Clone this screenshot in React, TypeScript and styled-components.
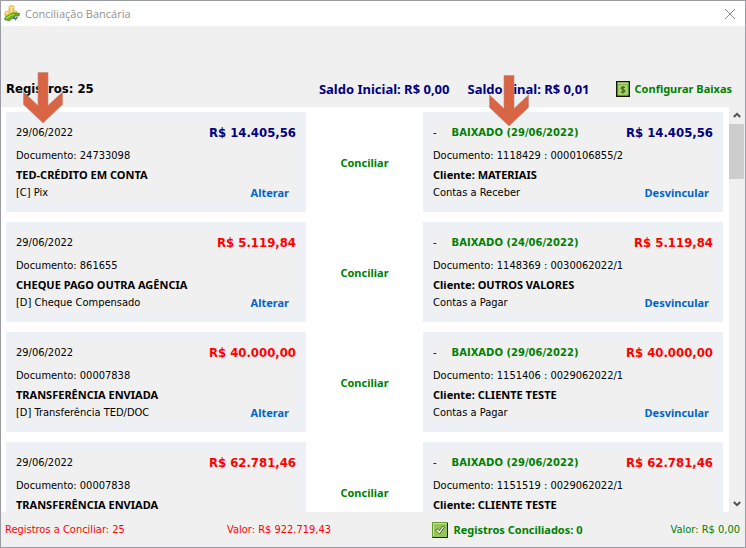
import React from "react";
import styled, { createGlobalStyle } from "styled-components";

const textFont = `"DejaVu Sans Condensed", "DejaVu Sans", sans-serif`;
const labelFont = `"Noto Sans", "Open Sans", sans-serif`;
const wideFont = `"DejaVu Sans", sans-serif`;

const color = {
  navy: "#000080",
  red: "#ff0000",
  green: "#008000",
  blue: "#0066cc",
  face: "#f0f0f0",
  card: "#edf1f5",
  arrow: "#d96545",
};

const GlobalStyle = createGlobalStyle`
  * { box-sizing: border-box; }
  body { margin: 0; font-family: ${textFont}; font-size: 11px; line-height: 16px; color: #000; }
  h1, h2, p, ul { margin: 0; padding: 0; }
  button { border: 0; padding: 0; background: none; cursor: pointer; }
`;

const Window = styled.main`
  position: relative;
  display: flex;
  flex-direction: column;
  height: 100vh;
  border: 1px solid #999ca3;
  background: ${color.face};
  overflow: hidden;
`;

const TitleBar = styled.header`
  display: flex;
  align-items: center;
  gap: 4px;
  height: 25px;
  flex: none;
  padding: 0 9px 0 3px;
  background: #fff;
`;

const Title = styled.h1`
  flex: 1;
  font: 400 11px/16px "Open Sans", "Noto Sans", sans-serif;
  color: #929292;
`;

const CloseButton = styled.button`
  display: flex;
  color: #8a8a8a;
`;

const Summary = styled.section`
  display: flex;
  align-items: center;
  flex: none;
  height: 81px;
  padding: 44px 13px 0 5px;
`;

const Count = styled.h2`
  flex: 1;
  font: 700 13px/18px ${textFont};
`;

const Balance = styled.p`
  margin-right: 18px;
  font: 700 13px/18px ${labelFont};
  color: ${color.navy};
  white-space: nowrap;
`;

const Action = styled.button<{ $tone: "green" | "blue" }>`
  display: inline-flex;
  align-items: center;
  gap: 5px;
  font: 700 11px/16px ${labelFont};
  color: ${(p) => color[p.$tone]};
  white-space: nowrap;
`;

const ConfigAction = styled(Action)`
  margin-left: 8px;
`;

const Body = styled.section`
  display: flex;
  flex: 1;
  min-height: 0;
`;

const List = styled.ul`
  display: flex;
  flex: 1;
  flex-direction: column;
  gap: 10px;
  && { padding: 5px 6px 0 5px; }
  background: #fff;
  list-style: none;
  overflow: hidden;
`;

const Pair = styled.li`
  display: grid;
  flex: none;
  grid-template-columns: 1fr 117px 1fr;
  align-items: stretch;
`;

const Middle = styled.div`
  display: flex;
  justify-content: center;
  align-items: center;
  padding-top: 2px;
`;

const Card = styled.article`
  padding: 10px;
  background: ${color.card};
`;

const CardFace = styled.div`
  display: grid;
  grid-template-rows: 24px 20px 18px 18px;
  background: ${color.face};
`;

const Line = styled.div`
  display: flex;
  align-items: center;
  justify-content: space-between;
  white-space: nowrap;
`;

const TopLine = styled(Line)`
  align-items: flex-start;
  padding-top: 3px;
`;

const LastLine = styled(Line)<{ $inset: number }>`
  padding-right: ${(p) => p.$inset}px;
`;

const Strong = styled.strong`
  font: 700 11px/16px ${labelFont};
`;

const Status = styled.span`
  display: flex;
  gap: 15px;
`;

const Settled = styled.strong`
  font: 700 10px/16px ${wideFont};
  color: ${color.green};
`;

const Amount = styled.strong<{ $credit?: boolean }>`
  font: 700 13px/16px ${textFont};
  color: ${(p) => (p.$credit ? color.navy : color.red)};
`;

const ScrollTrack = styled.div`
  display: flex;
  flex: none;
  flex-direction: column;
  width: 16px;
  color: #505050;
`;

const ScrollButton = styled.button`
  display: flex;
  align-items: center;
  justify-content: center;
  height: 17px;
  color: inherit;
`;

const ScrollThumb = styled.div`
  flex: none;
  height: 55px;
  margin-right: 1px;
  background: #cdcdcd;
`;

const ScrollRest = styled.div`
  flex: 1;
`;

const Footer = styled.footer`
  display: grid;
  grid-template-columns: 222px 1fr auto auto;
  align-items: center;
  flex: none;
  height: 35px;
  padding: 0 5px 0 4px;
`;

const Total = styled.p<{ $tone: "red" | "green" }>`
  color: ${(p) => color[p.$tone]};
`;

const Reconciled = styled.p`
  display: flex;
  align-items: center;
  gap: 5px;
  && { margin-right: 88px; }
  font: 700 11px/16px ${labelFont};
  color: ${color.green};
`;

const Pointer = styled.svg<{ $left: number; $top: number }>`
  position: absolute;
  left: ${(p) => p.$left}px;
  top: ${(p) => p.$top}px;
  pointer-events: none;
`;

function DownArrow({ left, top }: { left: number; top: number }) {
  return (
    <Pointer $left={left} $top={top} width="40" height="52" viewBox="0 0 40 52" aria-hidden="true">
      <path d="M15 .5H25V33.5L39.5 20V32.5L20 51L.5 32.5V20L15 33.5Z" fill={color.arrow} stroke="#b98c7f" strokeWidth=".6" />
    </Pointer>
  );
}

function AppIcon() {
  return (
    <svg width="17" height="17" viewBox="0 0 17 17" aria-hidden="true">
      <path d="M5 1.2L7.5 .6L10 1.2V6L13 6.6V11H1V7L5 6Z" fill="#f2cb62" stroke="#dcae45" strokeWidth=".8" />
      <path d="M5.6 2L7.5 3L9.4 2M7.5 3V6.5M1.8 7.6L4 8.4" fill="none" stroke="#fff0a9" strokeWidth="1.2" />
      <path d="M1 12.5L6.5 9L9 8L15.5 8.4L15 10.8L11 11L5.5 15.6L.8 14.8Z" fill="#65b51b" stroke="#398319" strokeWidth=".8" />
      <path d="M2 13.4L7 10L10 9.4" fill="none" stroke="#b5df3f" strokeWidth="1.3" />
      <path d="M8.5 14L10.5 12.4L11.5 14.5L13.5 12" fill="none" stroke="#52768c" strokeWidth="1.4" />
    </svg>
  );
}

function MoneyIcon() {
  return (
    <svg width="14" height="16" viewBox="0 0 14 16" aria-hidden="true">
      <path d="M.7.7H13.3V15.3H.7Z" fill="#8dbd50" stroke="#10180b" strokeWidth="1.4" />
      <path d="M1.5 2H12.5" stroke="#d6f0a4" />
      <path d="M2 3.8H12V14.2H2Z" fill="#a9d568" stroke="#79aa40" strokeWidth=".6" />
      <path d="M9 6.6C7.8 5.7 5.1 5.9 5.1 7.3C5.1 8.9 8.9 8.3 8.9 10C8.9 11.5 6 11.7 4.8 10.8M7 5V12.5" fill="none" stroke="#3d6a20" strokeWidth="1.2" />
    </svg>
  );
}

function CheckIcon() {
  return (
    <svg width="16" height="16" viewBox="0 0 16 16" aria-hidden="true">
      <path d="M.5.5H15.5V15.5H.5Z" fill="#94c556" stroke="#6a9934" />
      <path d="M1.5 14V1.5H14" fill="none" stroke="#c3e58c" />
      <path d="M.5 15.5H15.5V1" fill="none" stroke="#17220f" />
      <path d="M3.5 8L5.5 6.8L7.3 8.8L11 3.8L12.6 5L7.5 12Z" fill="#f4faea" stroke="#385d1d" strokeWidth=".9" />
    </svg>
  );
}

function Chevron({ up }: { up?: boolean }) {
  return (
    <svg width="8" height="7" viewBox="0 0 8 7" aria-hidden="true">
      <path d={up ? "M.8 5L4 1.8L7.2 5" : "M.8 2L4 5.2L7.2 2"} fill="none" stroke="currentColor" strokeWidth="2" />
    </svg>
  );
}

interface Entry {
  amount: string;
  credit?: boolean;
  bankDocument: string;
  description: string;
  kind: string;
  settledOn: string;
  document: string;
  client: string;
  account: string;
}

const entries: Entry[] = [
  {
    amount: "R$ 14.405,56", credit: true, bankDocument: "24733098", description: "TED-CRÉDITO EM CONTA", kind: "[C] Pix",
    settledOn: "29/06/2022", document: "1118429 : 0000106855/2", client: "MATERIAIS", account: "Contas a Receber",
  },
  {
    amount: "R$ 5.119,84", bankDocument: "861655", description: "CHEQUE PAGO OUTRA AGÊNCIA", kind: "[D] Cheque Compensado",
    settledOn: "24/06/2022", document: "1148369 : 0030062022/1", client: "OUTROS VALORES", account: "Contas a Pagar",
  },
  {
    amount: "R$ 40.000,00", bankDocument: "00007838", description: "TRANSFERÊNCIA ENVIADA", kind: "[D] Transferência TED/DOC",
    settledOn: "29/06/2022", document: "1151406 : 0029062022/1", client: "CLIENTE TESTE", account: "Contas a Pagar",
  },
  {
    amount: "R$ 62.781,46", bankDocument: "00007838", description: "TRANSFERÊNCIA ENVIADA", kind: "",
    settledOn: "29/06/2022", document: "1151519 : 0029062022/1", client: "CLIENTE TESTE", account: "",
  },
];

function EntryPair({ entry }: { entry: Entry }) {
  return (
    <Pair>
      <Card>
        <CardFace>
          <TopLine>
            <span>29/06/2022</span>
            <Amount $credit={entry.credit}>{entry.amount}</Amount>
          </TopLine>
          <Line>Documento: {entry.bankDocument}</Line>
          <Line><Strong>{entry.description}</Strong></Line>
          {entry.kind && (
            <LastLine $inset={7}>
              <span>{entry.kind}</span>
              <Action type="button" $tone="blue">Alterar</Action>
            </LastLine>
          )}
        </CardFace>
      </Card>
      <Middle>
        <Action type="button" $tone="green">Conciliar</Action>
      </Middle>
      <Card>
        <CardFace>
          <TopLine>
            <Status>
              <span>-</span>
              <Settled>BAIXADO ({entry.settledOn})</Settled>
            </Status>
            <Amount $credit={entry.credit}>{entry.amount}</Amount>
          </TopLine>
          <Line>Documento: {entry.document}</Line>
          <Line><Strong>Cliente: {entry.client}</Strong></Line>
          {entry.account && (
            <LastLine $inset={4}>
              <span>{entry.account}</span>
              <Action type="button" $tone="blue">Desvincular</Action>
            </LastLine>
          )}
        </CardFace>
      </Card>
    </Pair>
  );
}

export default function App() {
  return (
    <>
      <GlobalStyle />
      <Window>
        <TitleBar>
          <AppIcon />
          <Title>Conciliação Bancária</Title>
          <CloseButton type="button" aria-label="Fechar">
            <svg width="12" height="12" viewBox="0 0 12 12" aria-hidden="true">
              <path d="M1 1L11 11M11 1L1 11" stroke="currentColor" />
            </svg>
          </CloseButton>
        </TitleBar>
        <Summary>
          <Count>Registros: 25</Count>
          <Balance>Saldo Inicial: R$ 0,00</Balance>
          <Balance>Saldo Final: R$ 0,01</Balance>
          <ConfigAction type="button" $tone="green">
            <MoneyIcon />
            Configurar Baixas
          </ConfigAction>
        </Summary>
        <Body>
          <List>
            {entries.map((entry) => (
              <EntryPair key={entry.amount} entry={entry} />
            ))}
          </List>
          <ScrollTrack>
            <ScrollButton type="button" aria-label="Rolar para cima"><Chevron up /></ScrollButton>
            <ScrollThumb />
            <ScrollRest />
            <ScrollButton type="button" aria-label="Rolar para baixo"><Chevron /></ScrollButton>
          </ScrollTrack>
        </Body>
        <Footer>
          <Total $tone="red">Registros a Conciliar: 25</Total>
          <Total $tone="red">Valor: R$ 922.719,43</Total>
          <Reconciled>
            <CheckIcon />
            Registros Conciliados: 0
          </Reconciled>
          <Total $tone="green">Valor: R$ 0,00</Total>
        </Footer>
        <DownArrow left={22} top={71} />
        <DownArrow left={488} top={74} />
      </Window>
    </>
  );
}
